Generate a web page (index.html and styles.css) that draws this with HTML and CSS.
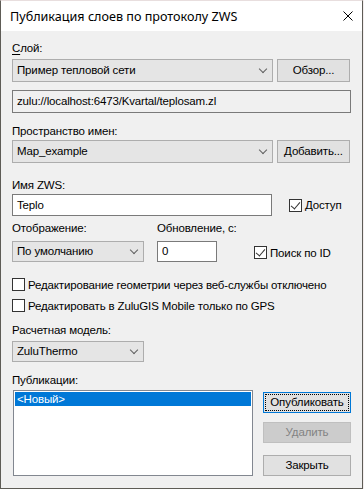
FILE: index.html
```html
<!DOCTYPE html>
<html lang="ru">
<head>
  <meta charset="UTF-8" />
  <meta name="viewport" content="width=device-width, initial-scale=1" />
  <title>Публикация слоев по протоколу ZWS</title>
  <link rel="stylesheet" href="styles.css">
</head>
<body>

  <div class="window">
    <div class="titlebar">
      <span class="title">Публикация слоев по протоколу ZWS</span>
      <svg class="close" width="10" height="10" viewBox="0 0 10 10">
        <path d="M0.5 0.5 L9.5 9.5 M9.5 0.5 L0.5 9.5" stroke="#000" stroke-width="1" fill="none" />
      </svg>
    </div>

    <div class="content">
      <div class="label lbl-layer"><u>С</u>лой:</div>
      <div class="row row-layer">
        <div class="combo combo-wide">Пример тепловой сети<span class="chev"></span></div>
        <div class="btn btn-side">Обзор...</div>
      </div>
      <div class="edit edit-ro">zulu://localhost:6473/Kvartal/teplosam.zl</div>

      <div class="label lbl-ns">Пространство имен:</div>
      <div class="row row-ns">
        <div class="combo combo-wide">Map_example<span class="chev"></span></div>
        <div class="btn btn-side">Добавить...</div>
      </div>

      <div class="label lbl-name">Имя ZWS:</div>
      <div class="row row-name">
        <div class="edit edit-name">Teplo</div>
        <div class="check check-access"><span class="box checked"></span>Доступ</div>
      </div>

      <div class="row row-view">
        <div class="col col-view">
          <div class="label">Отображение:</div>
          <div class="combo combo-small">По умолчанию<span class="chev"></span></div>
        </div>
        <div class="col col-refresh">
          <div class="label">Обновление, с:</div>
          <div class="edit edit-num">0</div>
        </div>
        <div class="check check-id"><span class="box checked"></span>Поиск по ID</div>
      </div>

      <div class="check check-geom"><span class="box"></span>Редактирование геометрии через веб-службы отключено</div>
      <div class="check check-gps"><span class="box"></span>Редактировать в ZuluGIS Mobile только по GPS</div>

      <div class="label lbl-model">Расчетная модель:</div>
      <div class="combo combo-small combo-model">ZuluThermo<span class="chev"></span></div>

      <div class="label lbl-pub">Публикации:</div>
      <div class="row row-pub">
        <div class="listbox">
          <div class="list-item selected">&lt;Новый&gt;</div>
        </div>
        <div class="actions">
          <div class="btn btn-default"><span class="focus">Опубликовать</span></div>
          <div class="btn btn-disabled">Удалить</div>
          <div class="btn btn-close">Закрыть</div>
        </div>
      </div>
    </div>
  </div>

</body>
</html>
```

FILE: styles.css
```css
* {
  box-sizing: border-box;
}

body {
  margin: 0;
  background: #f3eeee;
  font-family: 'Liberation Sans', Arial, sans-serif;
  font-size: 11.5px;
  letter-spacing: -0.15px;
  color: #000;
}

.window {
  width: 363px;
  height: 489px;
  background: #f0f0f0;
  border: 1px solid #5e5c56;
  border-top: 1px solid #e8dede;
  display: flex;
  flex-direction: column;
}

.titlebar {
  height: 30px;
  background: #fff;
  display: flex;
  align-items: center;
  padding: 0 9px 0 9px;
  flex-shrink: 0;
}

.title {
  flex: 1;
  font-family: 'Noto Sans', sans-serif;
  font-size: 12.6px;
  letter-spacing: 0;
  line-height: 14px;
  padding-top: 1px;
}

.content {
  padding: 10px 11px 0 11px;
  display: flex;
  flex-direction: column;
}

.label {
  line-height: 14px;
  height: 14px;
  white-space: nowrap;
}

.label u {
  text-decoration-thickness: 1px;
  text-underline-offset: 2px;
}

.row {
  display: flex;
}

/* combo boxes */
.combo {
  position: relative;
  height: 23px;
  background: #e5e5e5;
  border: 1px solid #adadad;
  padding-left: 4px;
  line-height: 21px;
  white-space: nowrap;
}

.combo-wide {
  width: 261px;
}

.combo-small {
  width: 132px;
  height: 21px;
  line-height: 19px;
}

.chev {
  position: absolute;
  right: 6px;
  top: 50%;
  width: 6px;
  height: 6px;
  margin-top: -5px;
  border-right: 1px solid #606060;
  border-bottom: 1px solid #606060;
  transform: rotate(45deg);
}

/* buttons */
.btn {
  height: 23px;
  background: #e1e1e1;
  border: 1px solid #adadad;
  text-align: center;
  line-height: 21px;
  white-space: nowrap;
}

.btn-side {
  width: 73px;
  margin-left: 4px;
}

/* edits */
.edit {
  height: 23px;
  background: #fff;
  border: 1px solid #7a7a7a;
  padding-left: 4px;
  line-height: 21px;
  white-space: nowrap;
}

.edit-ro {
  background: #f0f0f0;
  width: 339px;
  margin-top: 8px;
}

.edit-name {
  width: 260px;
  height: 22px;
  line-height: 20px;
}

.edit-num {
  width: 60px;
  height: 21px;
  line-height: 19px;
}

/* checkboxes */
.check {
  display: flex;
  align-items: center;
  height: 17px;
  white-space: nowrap;
}

.box {
  width: 13px;
  height: 13px;
  border: 1px solid #333;
  background: #fff;
  margin-right: 3px;
  position: relative;
  flex-shrink: 0;
}

.box.checked::after {
  content: "";
  position: absolute;
  left: 3px;
  top: 0px;
  width: 4px;
  height: 8px;
  border-right: 1px solid #333;
  border-bottom: 1px solid #333;
  transform: rotate(40deg);
}

/* vertical rhythm */
.row-layer { margin-top: 4px; }
.lbl-ns { margin-top: 11px; }
.row-ns { margin-top: 2px; }
.lbl-name { margin-top: 15px; }
.row-name { margin-top: 2px; align-items: center; }
.check-access { margin-left: 17px; }

.row-view {
  margin-top: 5px;
  align-items: flex-end;
}

.col {
  display: flex;
  flex-direction: column;
}

.col .label { margin-bottom: 6px; }
.col-view { width: 132px; }
.col-refresh { width: 60px; margin-left: 13px; }
.check-id { margin-left: 37px; margin-bottom: 1px; }

.check-geom { margin-top: 14px; }
.check-gps { margin-top: 4px; }
.lbl-model { margin-top: 9px; }
.combo-model { margin-top: 4px; }
.lbl-pub { margin-top: 11px; }

.row-pub {
  margin-top: 3px;
}

.listbox {
  width: 240px;
  height: 86px;
  margin-left: 1px;
  background: #fff;
  border: 1px solid #828790;
  padding: 1px;
}

.list-item {
  height: 14px;
  line-height: 14px;
  padding-left: 2px;
}

.list-item.selected {
  background: #0078d7;
  color: #fff;
}

.actions {
  margin-left: 10px;
  width: 88px;
  display: flex;
  flex-direction: column;
  padding-top: 2px;
}

.actions .btn {
  height: 21px;
  line-height: 19px;
}

.btn-default {
  border: 1px solid #0078d7;
  padding: 1px;
  line-height: 17px;
}

.btn-default .focus {
  display: block;
  height: 17px;
  border: 1px dotted #000;
  line-height: 15px;
}

.btn-disabled {
  margin-top: 9px;
  background: #cccccc;
  border-color: #bfbfbf;
  color: #838383;
}

.btn-close {
  margin-top: 12px;
}
```
